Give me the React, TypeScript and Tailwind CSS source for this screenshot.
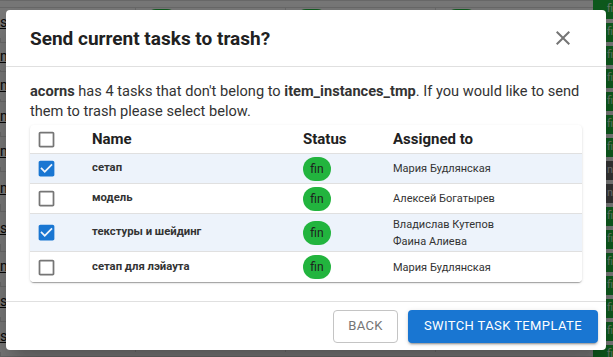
import { Fragment } from 'react';

type TaskRow = {
  id: string;
  name: string;
  status: string;
  assignees: string[];
  selected: boolean;
};

const tasks: TaskRow[] = [
  { id: '1', name: 'сетап', status: 'fin', assignees: ['Мария Будлянская'], selected: true },
  { id: '2', name: 'модель', status: 'fin', assignees: ['Алексей Богатырев'], selected: false },
  {
    id: '3',
    name: 'текстуры и шейдинг',
    status: 'fin',
    assignees: ['Владислав Кутепов', 'Фаина Алиева'],
    selected: true
  },
  { id: '4', name: 'сетап для лэйаута', status: 'fin', assignees: ['Мария Будлянская'], selected: false }
];

// rows of the page sitting behind the dialog
const pageRows = [
  { id: 'r0', label: 'shot_010', h: 'h-[35px]', tone: 'bg-[#eeeeee]' },
  { id: 'r1', label: 'model', h: 'h-[29px]', tone: 'bg-[#eeeeee]' },
  { id: 'r2', label: 'model', h: 'h-[30px]', tone: 'bg-[#eeeeee]' },
  { id: 'r3', label: 'model', h: 'h-[35px]', tone: 'bg-[#eeeeee]' },
  { id: 'r4', label: 'model', h: 'h-[35px]', tone: 'bg-[#eeeeee]' },
  { id: 'r5', label: 'model', h: 'h-[40px]', tone: 'bg-[#eeeeee]' },
  { id: 'r6', label: 'shot_020', h: 'h-[40px]', tone: 'bg-[#eeeeee]' },
  { id: 'r7', label: 'model', h: 'h-[35px]', tone: 'bg-[#eeeeee]' },
  { id: 'r8', label: 'shot_030', h: 'h-[35px]', tone: 'bg-[#eeeeee]' },
  { id: 'r9', label: 'shot_040', h: 'h-[35px]', tone: 'bg-[#eeeeee]' },
  { id: 'r10', label: 'shot_050', h: 'h-[35px]', tone: 'bg-[#bbbbbb]' }
];

const sideCells = Array.from({ length: 16 }, (_, i) => ({ id: i, dark: i === 7 || i === 8 }));

function BoxIcon({ checked }: { checked: boolean }) {
  return checked ? (
    <svg viewBox="0 0 24 24" className="h-[21px] w-[21px] fill-[#1976d2]">
      <path d="M19 3H5c-1.11 0-2 .9-2 2v14c0 1.1.89 2 2 2h14c1.11 0 2-.9 2-2V5c0-1.1-.89-2-2-2zm-9 14l-5-5 1.41-1.41L10 14.17l7.59-7.59L19 8l-9 9z" />
    </svg>
  ) : (
    <svg viewBox="0 0 24 24" className="h-[21px] w-[21px] fill-[#757575]">
      <path d="M19 5v14H5V5h14m0-2H5c-1.1 0-2 .9-2 2v14c0 1.1.9 2 2 2h14c1.1 0 2-.9 2-2V5c0-1.1-.9-2-2-2z" />
    </svg>
  );
}

function BackgroundPage() {
  return (
    <div className="flex h-full w-full bg-[#eeeeee]">
      <div className="w-[593px] shrink-0 border-t border-[#d0d0d0] pt-0">
        <div className="h-[6px]" />
        {pageRows.map((row) => (
          <div
            key={row.id}
            className={`grid grid-cols-[135px_150px_150px_158px] border-t border-[#d0d0d0] ${row.h} ${row.tone}`}
          >
            <div className="flex items-center text-[14px] text-[#111] underline">{row.label}</div>
            {[0, 1, 2].map((c) => (
              <div key={c} className="border-l border-[#d0d0d0] pl-[8px] pt-[1px]">
                <div className="h-[24px] w-[35px] rounded-full bg-[#22b43e]" />
              </div>
            ))}
            <div className="border-l border-[#d0d0d0]" />
          </div>
        ))}
      </div>
      <div className="flex flex-1 flex-col gap-[4px] pt-0">
        {sideCells.map((cell) => (
          <div
            key={cell.id}
            className={`flex h-[19px] shrink-0 items-center pl-[14px] text-[11px] ${
              cell.dark ? 'bg-[#666666] text-[#dddddd]' : 'bg-[#1cb23a] text-[#c8e8c8]'
            }`}
          >
            {cell.dark ? 'new' : 'fin'}
          </div>
        ))}
      </div>
    </div>
  );
}

export default function App() {
  return (
    <div className="relative h-[357px] w-[613px] overflow-hidden font-['Roboto',sans-serif]">
      <BackgroundPage />
      <div className="absolute inset-0 bg-black/50" />

      <div className="absolute left-[6px] top-[10px] flex h-[340px] w-[600px] flex-col rounded-[4px] bg-white shadow-[0_11px_15px_-7px_rgba(0,0,0,0.2),0_24px_38px_3px_rgba(0,0,0,0.14)]">
        <header className="flex items-center justify-between border-b border-[#e0e0e0] py-[16px] pl-[24px] pr-[31px]">
          <h2 className="text-[19px] font-bold leading-[21px] text-[#212121]">Send current tasks to trash?</h2>
          <svg viewBox="0 0 24 24" className="h-[24px] w-[24px] fill-[#757575]">
            <path d="M19 6.41 17.59 5 12 10.59 6.41 5 5 6.41 10.59 12 5 17.59 6.41 19 12 13.41 17.59 19 19 17.59 13.41 12z" />
          </svg>
        </header>

        <main className="px-[24px] pb-[19px] pt-[14px]">
          <p className="text-[14.6px] leading-[20px] text-[#333333]">
            <span className="font-bold">acorns</span> has 4 tasks that don't belong to{' '}
            <span className="font-bold">item_instances_tmp</span>. If you would like to send them to trash please
            select below.
          </p>
          <div className="mt-[4px] overflow-hidden rounded-[4px] bg-white shadow-[0_2px_1px_-1px_rgba(0,0,0,0.2),0_1px_1px_0_rgba(0,0,0,0.14),0_1px_3px_0_rgba(0,0,0,0.12)]">
            <div className="grid grid-cols-[62px_211px_90px_1fr] text-[#212121]">
              <div className="flex h-[29px] items-center border-b border-[#e0e0e0] pl-[6px]">
                <BoxIcon checked={false} />
              </div>
              <div className="flex items-center border-b border-[#e0e0e0] text-[15px] font-bold">Name</div>
              <div className="flex items-center border-b border-[#e0e0e0] text-[15px] font-bold">Status</div>
              <div className="flex items-center border-b border-[#e0e0e0] text-[15px] font-bold">Assigned to</div>

              {tasks.map((task, i) => {
                const last = i === tasks.length - 1;
                const rowCls = `${task.selected ? 'bg-[#edf3fb]' : 'bg-white'} ${
                  last ? '' : 'border-b border-[#e0e0e0]'
                }`;
                const tall = task.assignees.length > 1;
                return (
                  <Fragment key={task.id}>
                    <div className={`flex items-center pl-[6px] ${tall ? 'h-[38px]' : 'h-[30px]'} ${rowCls}`}>
                      <BoxIcon checked={task.selected} />
                    </div>
                    <div className={`flex items-center text-[11.3px] font-bold text-[#333333] ${rowCls}`}>
                      {task.name}
                    </div>
                    <div className={`flex items-center ${rowCls}`}>
                      <span className="flex h-[24px] w-[28px] items-center justify-center rounded-full bg-[#22b43e] text-[12px] text-[#1f1f1f]">
                        {task.status}
                      </span>
                    </div>
                    <div className={`flex flex-col justify-center text-[11px] leading-[17px] text-[#333333] ${rowCls}`}>
                      {task.assignees.map((a) => (
                        <span key={a}>{a}</span>
                      ))}
                    </div>
                  </Fragment>
                );
              })}
            </div>
          </div>
        </main>

        <footer className="flex flex-1 items-center justify-end gap-[10px] border-t border-[#e0e0e0] pr-[8px]">
          <button className="h-[33px] rounded-[4px] border border-[#c4c4c4] px-[14px] text-[13px] uppercase tracking-[0.4px] text-[#757575]">
            Back
          </button>
          <button className="h-[33px] rounded-[4px] bg-[#1976d2] px-[16px] text-[13px] uppercase tracking-[0.4px] text-white shadow-[0_3px_1px_-2px_rgba(0,0,0,0.2),0_2px_2px_0_rgba(0,0,0,0.14),0_1px_5px_0_rgba(0,0,0,0.12)]">
            Switch task template
          </button>
        </footer>
      </div>
    </div>
  );
}
